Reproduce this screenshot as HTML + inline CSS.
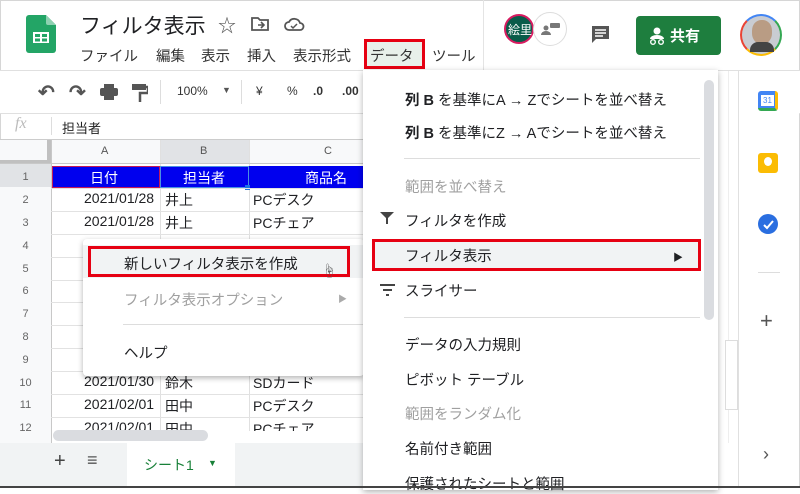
<!DOCTYPE html>
<html><head><meta charset="utf-8"><style>
*{box-sizing:border-box;margin:0;padding:0}
body{width:800px;height:488px;overflow:hidden;background:#fff;font-family:"Liberation Sans","Noto Sans CJK JP",sans-serif;color:#202124;position:relative}
.a{position:absolute}
.t{position:absolute;white-space:nowrap}
.menu .t{font-size:14.5px;color:#202124}
.g{color:#a0a0a0!important}
.cell{position:absolute;font-size:14px;white-space:nowrap;color:#202124}
.rn{position:absolute;left:0;width:51px;text-align:center;font-size:11px;color:#666}
.hl{position:absolute;left:51px;width:313px;height:1px;background:#e2e2e2}
</style></head><body>
<div class="a" style="left:0;top:0;width:800px;height:488px;border:1px solid #d6d6d6;border-bottom:2px solid #444"></div>

<!-- header -->
<svg class="a" style="left:26px;top:15px" width="30" height="38" viewBox="0 0 30 38"><path d="M3 0h17l10 10v25a3 3 0 0 1-3 3H3a3 3 0 0 1-3-3V3a3 3 0 0 1 3-3z" fill="#23a566"/><path d="M20 0l10 10h-8a2 2 0 0 1-2-2z" fill="#8ed1b1"/><rect x="7" y="17" width="16" height="11" fill="#fff"/><rect x="9" y="19" width="5" height="3" fill="#23a566"/><rect x="16" y="19" width="5" height="3" fill="#23a566"/><rect x="9" y="23.5" width="5" height="3" fill="#23a566"/><rect x="16" y="23.5" width="5" height="3" fill="#23a566"/></svg>
<div class="t" style="left:80px;top:10px;font-size:21px;color:#202124">フィルタ表示</div>
<div class="t" style="left:218px;top:12px;font-size:18px;color:#555">☆</div>
<svg class="a" style="left:250px;top:16px" width="20" height="16"><path d="M2 2h6l2 2h8v10H2z" fill="none" stroke="#555" stroke-width="1.8"/><path d="M8 9h6M11 6l3 3-3 3" fill="none" stroke="#555" stroke-width="1.6"/></svg>
<svg class="a" style="left:283px;top:16px" width="22" height="16"><path d="M6 14a4 4 0 0 1 0-8 6 6 0 0 1 11 1 3.5 3.5 0 0 1 0 7z" fill="none" stroke="#555" stroke-width="1.8"/><path d="M8 10l2 2 4-4" fill="none" stroke="#555" stroke-width="1.5"/></svg>
<div class="t" style="left:80px;top:45px;font-size:14.5px;color:#333;word-spacing:0">ファイル</div>
<div class="t" style="left:156px;top:45px;font-size:14.5px;color:#333">編集</div>
<div class="t" style="left:201px;top:45px;font-size:14.5px;color:#333">表示</div>
<div class="t" style="left:247px;top:45px;font-size:14.5px;color:#333">挿入</div>
<div class="t" style="left:293px;top:45px;font-size:14.5px;color:#333">表示形式</div>
<div class="a" style="left:364px;top:39px;width:61px;height:30px;border:3px solid #e60012;background:#e8f0ea"></div>
<div class="t" style="left:370px;top:45px;font-size:14.5px;color:#333">データ</div>
<div class="t" style="left:432px;top:45px;font-size:14.5px;color:#333">ツール</div>
<div class="a" style="left:483px;top:0;width:1px;height:70px;background:#e4e4e4"></div>
<div class="a" style="left:0;top:70px;width:800px;height:1px;background:#e0e0e0"></div>
<!-- avatars -->
<div class="a" style="left:504px;top:14px;width:30px;height:30px;border-radius:50%;background:#0a5c4a;border:2px solid #d81b60"></div>
<div class="t" style="left:508px;top:21px;font-size:12px;color:#fff">絵里</div>
<div class="a" style="left:533px;top:12px;width:34px;height:34px;border-radius:50%;background:#fff;border:1.5px solid #ddd"></div>
<svg class="a" style="left:541px;top:22px" width="20" height="14"><circle cx="5" cy="6" r="2.5" fill="#777"/><path d="M0 13a5 4 0 0 1 10 0z" fill="#777"/><rect x="9" y="1" width="10" height="5" rx="1" fill="#777"/></svg>
<svg class="a" style="left:590px;top:24px" width="22" height="22"><path d="M2 2h17v13H6l-4 4z" fill="#555"/><path d="M5 6h11M5 9h11M5 12h8" stroke="#fff" stroke-width="1.4"/></svg>
<div class="a" style="left:636px;top:16px;width:85px;height:39px;border-radius:4px;background:#1e7e3e"></div>
<svg class="a" style="left:648px;top:26px" width="18" height="20"><circle cx="9" cy="5" r="3.5" fill="#fff"/><path d="M2 13a7 4 0 0 1 14 0z" fill="#fff"/><circle cx="5" cy="16" r="2.3" fill="none" stroke="#fff" stroke-width="1.4"/><circle cx="13" cy="16" r="2.3" fill="none" stroke="#fff" stroke-width="1.4"/></svg>
<div class="t" style="left:670px;top:25px;font-size:15px;color:#fff;font-weight:bold">共有</div>
<div class="a" style="left:740px;top:14px;width:42px;height:42px;border-radius:50%;border:2.5px solid;border-color:#4285f4 #34a853 #fbbc04 #ea4335;background:#c9ccd2"></div>
<div class="a" style="left:752px;top:20px;width:20px;height:24px;border-radius:45%;background:#b99c84"></div>
<div class="a" style="left:750px;top:42px;width:24px;height:10px;border-radius:8px 8px 0 0;background:#444"></div>

<!-- toolbar -->
<div class="a" style="left:0;top:71px;width:800px;height:42px;background:#fff"></div>
<div class="t" style="left:38px;top:80px;font-size:20px;color:#555;font-weight:bold">↶</div>
<div class="t" style="left:69px;top:80px;font-size:20px;color:#555;font-weight:bold">↷</div>
<svg class="a" style="left:100px;top:84px" width="18" height="16"><rect x="4" y="0" width="10" height="4" fill="#555"/><rect x="0" y="4" width="18" height="8" rx="2" fill="#555"/><rect x="4" y="10" width="10" height="6" fill="#555"/></svg>
<svg class="a" style="left:132px;top:84px" width="16" height="18"><rect x="0" y="0" width="14" height="6" fill="#555"/><path d="M14 3h2v6H8v9" fill="none" stroke="#555" stroke-width="2.5"/></svg>
<div class="a" style="left:160px;top:80px;width:1px;height:24px;background:#ddd"></div>
<div class="t" style="left:177px;top:84px;font-size:12px;color:#333">100%</div>
<div class="t" style="left:222px;top:85px;font-size:9px;color:#555">▼</div>
<div class="a" style="left:241px;top:80px;width:1px;height:24px;background:#ddd"></div>
<div class="t" style="left:256px;top:84px;font-size:12px;color:#333">¥</div>
<div class="t" style="left:287px;top:84px;font-size:12px;color:#333">%</div>
<div class="t" style="left:313px;top:84px;font-size:12px;color:#333;font-weight:bold">.0</div>
<div class="t" style="left:342px;top:84px;font-size:12px;color:#333;font-weight:bold">.00</div>
<!-- formula bar -->
<div class="a" style="left:0;top:113px;width:800px;height:1px;background:#e0e0e0"></div>
<div class="t" style="left:15px;top:115px;font-size:16px;color:#bbb;font-style:italic;font-family:'Liberation Serif',serif">fx</div>
<div class="a" style="left:51px;top:117px;width:1px;height:18px;background:#ddd"></div>
<div class="t" style="left:62px;top:118px;font-size:13px;color:#222">担当者</div>
<div class="a" style="left:0;top:139px;width:740px;height:1px;background:#ccc"></div>

<!-- grid -->
<div class="a" style="left:0;top:140px;width:51px;height:303px;background:#f8f9fa"></div>
<div class="a" style="left:0;top:140px;width:364px;height:24px;background:#f8f9fa"></div>
<div class="a" style="left:160px;top:140px;width:89px;height:24px;background:#e1e3e6"></div>
<div class="a" style="left:0;top:163px;width:51px;height:24px;background:#e1e3e6"></div>
<div class="a" style="left:47px;top:140px;width:4px;height:24px;background:#c0c0c0"></div>
<div class="a" style="left:0;top:160px;width:51px;height:4px;background:#c0c0c0"></div>
<div class="t" style="left:101px;top:145px;font-size:11px;color:#555">A</div>
<div class="t" style="left:200px;top:145px;font-size:11px;color:#555">B</div>
<div class="t" style="left:324px;top:145px;font-size:11px;color:#555">C</div>
<div class="a" style="left:51px;top:140px;width:1px;height:303px;background:#c8c8c8"></div>
<div class="a" style="left:160px;top:140px;width:1px;height:303px;background:#e0e0e0"></div>
<div class="a" style="left:249px;top:140px;width:1px;height:303px;background:#e0e0e0"></div>
<div class="a" style="left:0;top:163px;width:364px;height:1px;background:#c8c8c8"></div>
<div class="a" style="left:52px;top:166px;width:312px;height:22px;background:#0000ee"></div>
<div class="a" style="left:52px;top:166px;width:108px;height:22px;border:1px solid #c2185b"></div>
<div class="a" style="left:160px;top:166px;width:89px;height:22px;border:1px solid #4a90e2"></div>
<div class="a" style="left:245px;top:185px;width:5px;height:5px;background:#1a73e8"></div>
<div class="t" style="left:90px;top:168px;font-size:14px;color:#fff">日付</div>
<div class="t" style="left:183px;top:168px;font-size:14px;color:#fff">担当者</div>
<div class="t" style="left:305px;top:168px;font-size:14px;color:#fff">商品名</div>
<div class="rn" style="top:171px">1</div>
<div class="rn" style="top:194px">2</div><div class="rn" style="top:217px">3</div><div class="rn" style="top:240px">4</div><div class="rn" style="top:263px">5</div><div class="rn" style="top:285px">6</div><div class="rn" style="top:308px">7</div><div class="rn" style="top:331px">8</div><div class="rn" style="top:354px">9</div><div class="rn" style="top:377px">10</div><div class="rn" style="top:399px">11</div><div class="rn" style="top:422px">12</div>
<div class="hl" style="top:188px"></div><div class="hl" style="top:211px"></div><div class="hl" style="top:234px"></div><div class="hl" style="top:257px"></div><div class="hl" style="top:280px"></div><div class="hl" style="top:302px"></div><div class="hl" style="top:325px"></div><div class="hl" style="top:348px"></div><div class="hl" style="top:371px"></div><div class="hl" style="top:394px"></div><div class="hl" style="top:417px"></div>
<div class="cell" style="left:84px;top:190px">2021/01/28</div><div class="cell" style="left:165px;top:190px">井上</div><div class="cell" style="left:253px;top:190px">PCデスク</div>
<div class="cell" style="left:84px;top:213px">2021/01/28</div><div class="cell" style="left:165px;top:213px">井上</div><div class="cell" style="left:253px;top:213px">PCチェア</div>
<div class="cell" style="left:84px;top:373px">2021/01/30</div><div class="cell" style="left:165px;top:373px">鈴木</div><div class="cell" style="left:253px;top:373px">SDカード</div>
<div class="cell" style="left:84px;top:396px">2021/02/01</div><div class="cell" style="left:165px;top:396px">田中</div><div class="cell" style="left:253px;top:396px">PCデスク</div>
<div style="position:absolute;left:52px;top:417px;width:312px;height:14px;overflow:hidden"><div class="cell" style="left:32px;top:2px">2021/02/01</div><div class="cell" style="left:113px;top:2px">田中</div><div class="cell" style="left:201px;top:2px">PCチェア</div></div>
<div class="a" style="left:52px;top:431px;width:312px;height:12px;background:#fff"></div>
<div class="a" style="left:53px;top:430px;width:155px;height:11px;border-radius:6px;background:#dadce0"></div>
<!-- right grid strip -->
<div class="a" style="left:718px;top:71px;width:20px;height:372px;background:#fff"></div>
<div class="a" style="left:728px;top:71px;width:1px;height:372px;background:#eee"></div>
<div class="a" style="left:725px;top:340px;width:13px;height:70px;border:1px solid #ddd;background:#fff"></div>
<!-- tabs -->
<div class="a" style="left:0;top:443px;width:364px;height:43px;background:#f1f3f4"></div>
<div class="t" style="left:54px;top:450px;font-size:20px;color:#444">+</div>
<div class="t" style="left:87px;top:450px;font-size:18px;color:#555">≡</div>
<div class="a" style="left:127px;top:443px;width:108px;height:43px;background:#fff"></div>
<div class="t" style="left:144px;top:455px;font-size:14px;color:#188038">シート1</div>
<div class="t" style="left:208px;top:458px;font-size:9px;color:#188038">▼</div>

<!-- side panel -->
<div class="a" style="left:738px;top:71px;width:1px;height:415px;background:#e0e0e0"></div>
<div class="a" style="left:739px;top:71px;width:60px;height:415px;background:#fff"></div>
<div class="a" style="left:758px;top:91px;width:20px;height:20px;border-radius:3px;background:#4285f4;border-right:3px solid #fbbc04;border-bottom:3px solid #34a853"></div>
<div class="a" style="left:761px;top:95px;width:13px;height:11px;background:#fff;font-size:8px;color:#4285f4;text-align:center;line-height:11px">31</div>
<div class="a" style="left:758px;top:153px;width:20px;height:20px;border-radius:3px;background:#fbbc04"></div>
<div class="a" style="left:764px;top:157px;width:8px;height:9px;border-radius:50%;background:#fff"></div>
<div class="a" style="left:758px;top:214px;width:20px;height:20px;border-radius:50%;background:#2a6ee0"></div>
<svg class="a" style="left:762px;top:218px" width="12" height="12"><path d="M2 7l3 3 6-7" fill="none" stroke="#fff" stroke-width="2"/></svg>
<div class="a" style="left:758px;top:272px;width:22px;height:1px;background:#ddd"></div>
<div class="t" style="left:760px;top:308px;font-size:22px;color:#555;font-weight:300">+</div>
<div class="t" style="left:763px;top:444px;font-size:18px;color:#555">›</div>

<!-- left submenu -->
<div class="a" style="left:83px;top:239px;width:281px;height:137px;background:#fff;border-radius:4px;box-shadow:0 2px 6px rgba(0,0,0,.3)"></div>
<div class="a" style="left:83px;top:245px;width:281px;height:33px;background:#f1f3f4"></div>
<div class="a" style="left:88px;top:246px;width:262px;height:31px;border:3px solid #e60012"></div>
<div class="t" style="left:124px;top:253px;font-size:14.5px">新しいフィルタ表示を作成</div>
<div class="t" style="left:322px;top:261px;font-size:14px;color:#555">☝</div>
<div class="t" style="left:124px;top:289px;font-size:14.5px;color:#a0a0a0">フィルタ表示オプション</div>
<div class="t" style="left:338px;top:292px;font-size:9px;color:#aaa">▶</div>
<div class="a" style="left:123px;top:324px;width:240px;height:1px;background:#ddd"></div>
<div class="t" style="left:124px;top:342px;font-size:14.5px">ヘルプ</div>

<!-- data menu -->
<div class="menu">
<div class="a" style="left:363px;top:70px;width:355px;height:420px;background:#fff;box-shadow:0 2px 6px rgba(0,0,0,.3)"></div>
<div class="a" style="left:704px;top:80px;width:10px;height:240px;border-radius:5px;background:#dadce0"></div>
<div class="t" style="left:405px;top:89px"><b>列 B</b> を基準にA → Zでシートを並べ替え</div>
<div class="t" style="left:405px;top:122px"><b>列 B</b> を基準にZ → Aでシートを並べ替え</div>
<div class="a" style="left:404px;top:158px;width:296px;height:1px;background:#ddd"></div>
<div class="t g" style="left:405px;top:176px">範囲を並べ替え</div>
<svg class="a" style="left:380px;top:212px" width="14" height="12"><path d="M0 0h14L8 6v6H6V6z" fill="#444"/></svg>
<div class="t" style="left:405px;top:210px">フィルタを作成</div>
<div class="a" style="left:374px;top:241px;width:325px;height:28px;background:#f1f3f4"></div>
<div class="a" style="left:372px;top:239px;width:329px;height:32px;border:3px solid #e60012"></div>
<div class="t" style="left:405px;top:245px">フィルタ表示</div>
<div class="t" style="left:673px;top:249px;font-size:10px!important">▶</div>
<svg class="a" style="left:380px;top:284px" width="15" height="12"><path d="M0 1h15M3 6h9M6 11h3" stroke="#444" stroke-width="2"/></svg>
<div class="t" style="left:405px;top:280px">スライサー</div>
<div class="a" style="left:404px;top:317px;width:296px;height:1px;background:#ddd"></div>
<div class="t" style="left:405px;top:334px">データの入力規則</div>
<div class="t" style="left:405px;top:369px">ピボット テーブル</div>
<div class="t g" style="left:405px;top:403px">範囲をランダム化</div>
<div class="t" style="left:405px;top:438px">名前付き範囲</div>
<div class="t" style="left:405px;top:473px">保護されたシートと範囲</div>
</div>
<div class="a" style="left:0;top:486px;width:800px;height:2px;background:#444"></div>
</body></html>
